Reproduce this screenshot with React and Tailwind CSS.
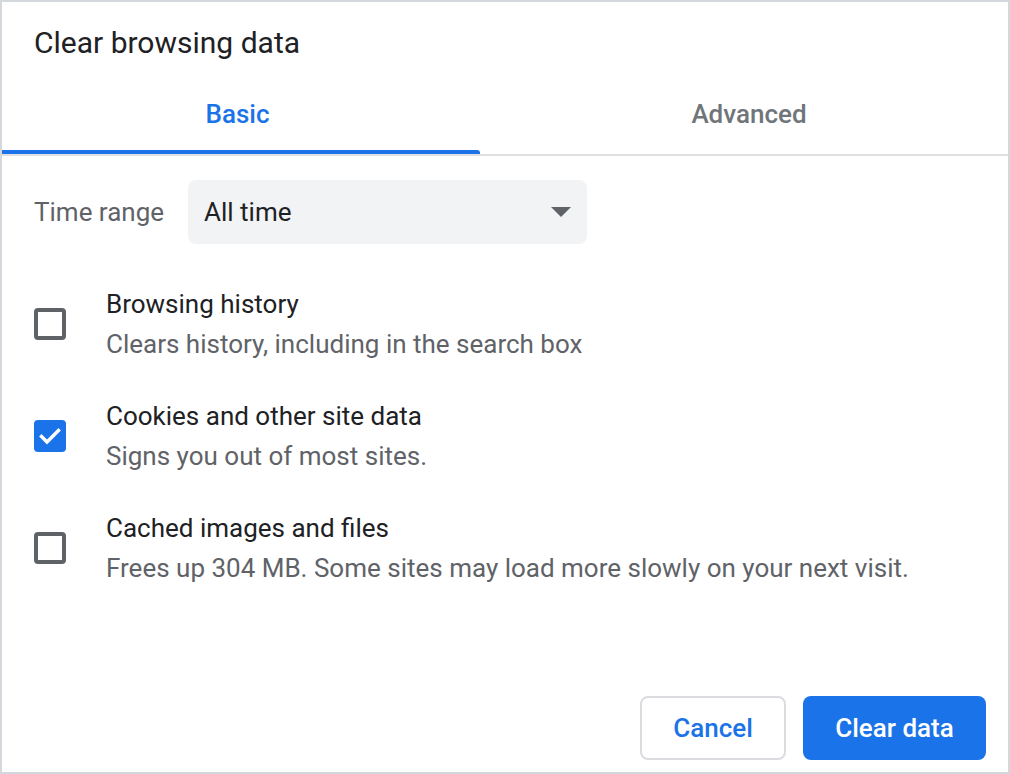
import React from "react";

function CheckBox({ checked }) {
  if (checked) {
    return (
      <div className="w-[32px] h-[32px] shrink-0 rounded-[4px] bg-[#1a73e8] flex items-center justify-center">
        <svg width="32" height="32" viewBox="0 0 32 32">
          <polyline points="7.5,16.5 13,22 24.5,10.5" fill="none" stroke="#ffffff" strokeWidth="3.4" strokeLinecap="square" />
        </svg>
      </div>
    );
  }
  return <div className="w-[32px] h-[32px] shrink-0 rounded-[4px] border-[4px] border-[#5f6368]" />;
}

function App() {
  const items = [
    { id: 1, title: "Browsing history", des: "Clears history, including in the search box", checked: false },
    { id: 2, title: "Cookies and other site data", des: "Signs you out of most sites.", checked: true },
    { id: 3, title: "Cached images and files", des: "Frees up 304 MB. Some sites may load more slowly on your next visit.", checked: false },
  ];

  return (
    <div className="w-[1010px] h-[774px] border-2 border-[#d4d8dc] bg-white flex flex-col font-['Roboto',sans-serif] text-[#202124]">
      {/* header */}
      <div className="h-[72px] pt-[21px] pl-[32px]">
        <h1 className="text-[30px] leading-[40px]">Clear browsing data</h1>
      </div>

      {/* tabs */}
      <div className="flex h-[82px] border-b-2 border-[#e0e0e0]">
        <div className="w-[478px] flex flex-col">
          <div className="flex-1 flex items-center justify-center pt-[4px] pr-[7px] text-[26px] font-medium text-[#1a73e8]">Basic</div>
          <div className="h-[4px] bg-[#1a73e8] rounded-tr-[3px]" />
        </div>
        <div className="flex-1 flex items-center justify-center pl-[10px] text-[26px] font-medium text-[#70757a]">Advanced</div>
      </div>

      {/* time range */}
      <div className="flex items-center mt-[24px] pl-[32px]">
        <span className="w-[154px] text-[26px] text-[#5f6368]">Time range</span>
        <div className="w-[399px] h-[64px] rounded-[8px] bg-[#f1f3f4] flex items-center justify-between pl-[16px] pr-[16px]">
          <span className="text-[26px]">All time</span>
          <svg width="20" height="10" viewBox="0 0 20 10">
            <polygon points="0,0 20,0 10,10" fill="#5f6368" />
          </svg>
        </div>
      </div>

      {/* options */}
      <div className="flex flex-col gap-[32px] mt-[40px] pl-[32px]">
        {items.map((item) => (
          <div key={item.id} className="flex items-center h-[80px]">
            <CheckBox checked={item.checked} />
            <div className="ml-[40px] text-[26px] leading-[40px]">
              <div>{item.title}</div>
              <div className="text-[#5f6368]">{item.des}</div>
            </div>
          </div>
        ))}
      </div>

      {/* buttons */}
      <div className="mt-auto flex justify-end gap-[17px] pr-[22px] pb-[12px]">
        <button className="w-[146px] h-[64px] rounded-[8px] border-2 border-[#dadce0] bg-white text-[26px] font-medium text-[#1a73e8]">Cancel</button>
        <button className="w-[183px] h-[64px] rounded-[8px] bg-[#1a73e8] text-[26px] font-medium text-white">Clear data</button>
      </div>
    </div>
  );
}

export default App;
